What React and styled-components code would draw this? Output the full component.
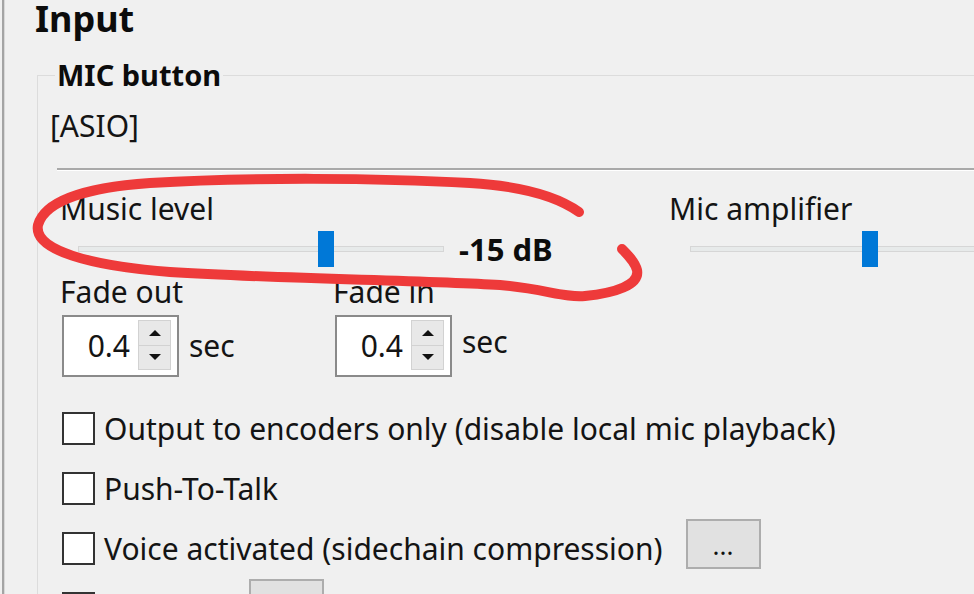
import React from "react";
import styled, { createGlobalStyle } from "styled-components";

const GlobalStyle = createGlobalStyle`
  html, body {
    margin: 0;
    padding: 0;
    background: #f0f0f0;
    overflow: hidden;
  }
  body {
    font-family: "Noto Sans", "Open Sans", sans-serif;
    color: #141414;
  }
`;

const Screen = styled.div`
  position: relative;
  width: 974px;
  height: 594px;
  overflow: hidden;
  display: flex;
  background: #f0f0f0;
`;

const Rule = styled.div`
  flex: none;
  width: 2px;
  margin-left: 2px;
  background: #a4a4a4;
  box-shadow: 1px 0 0 #d8d8d8;
`;

const Main = styled.div`
  flex: none;
  padding-left: 33px;
  display: flex;
  flex-direction: column;
`;

const Title = styled.h1`
  margin: 0 0 0 -2px;
  font-size: 36px;
  line-height: 38px;
  font-weight: 700;
  color: #0c0c0c;
`;

const Group = styled.fieldset`
  margin: 23px 0 0 0;
  padding: 0 0 40px 12px;
  width: 1100px;
  border: 1px solid #dcdcdc;
  border-right: none;
  min-width: 0;
`;

const Legend = styled.legend`
  margin-left: 5px;
  padding: 0 2px;
  font-size: 29px;
  line-height: 28px;
  font-weight: 700;
  color: #0c0c0c;
`;

const Device = styled.div`
  margin-top: 19px;
  font-size: 30px;
  line-height: 36px;
`;

const Separator = styled.div`
  margin: 24px 0 0 7px;
  height: 0;
  border-top: 2px solid #a9a9a9;
  border-bottom: 1px solid #ffffff;
`;

const Columns = styled.div`
  display: flex;
  margin: ${(p) => p.$top}px 0 0 10px;
`;

const Column = styled.div`
  flex: none;
  width: ${(p) => p.$width}px;
  display: flex;
  flex-direction: column;
  align-items: flex-start;
`;

const Label = styled.div`
  font-size: 30px;
  line-height: 36px;
  white-space: nowrap;
`;

const Slider = styled.div`
  display: flex;
  align-items: center;
  height: 36px;
  margin: 4px 0 0 ${(p) => p.$indent}px;
`;

const Track = styled.div`
  position: relative;
  flex: none;
  width: 364px;
  height: 4px;
  background: #e7eaea;
  border: 1px solid #d6d6d6;
`;

const Thumb = styled.div`
  position: absolute;
  top: -16px;
  left: ${(p) => p.$pos}px;
  width: 16px;
  height: 36px;
  background: #0078d7;
`;

const Value = styled.div`
  margin-left: 15px;
  font-size: 31px;
  line-height: 36px;
  font-weight: 700;
  color: #0c0c0c;
`;

const SpinRow = styled.div`
  display: flex;
  align-items: center;
  margin: 5px 0 0 2px;
`;

const SpinBox = styled.div`
  box-sizing: border-box;
  width: 117px;
  height: 62px;
  background: #ffffff;
  border: 2px solid #8a8a8a;
  display: flex;
  align-items: center;
  justify-content: flex-end;
  padding-right: 6px;
`;

const SpinValue = styled.div`
  font-size: 30px;
  line-height: 36px;
  margin-right: 8px;
`;

const SpinButtons = styled.div`
  display: flex;
  flex-direction: column;
  width: 33px;
  height: 50px;
  margin-bottom: 2px;
`;

const SpinButton = styled.div`
  flex: 1;
  display: flex;
  align-items: center;
  justify-content: center;
  background: #e8e8e8;
  border: 1px solid #d2d2d2;
  & + & {
    border-top: none;
  }
`;

const Arrow = styled.div`
  width: 0;
  height: 0;
  border-left: 6px solid transparent;
  border-right: 6px solid transparent;
  ${(p) =>
    p.$down
      ? "border-top: 6px solid #111;"
      : "border-bottom: 6px solid #111;"}
`;

const Unit = styled.div`
  margin-left: 10px;
  font-size: 30px;
  line-height: 36px;
  position: relative;
  top: ${(p) => p.$shift || 0}px;
`;

const CheckList = styled.div`
  display: flex;
  flex-direction: column;
  gap: 27px;
  margin: 35px 0 0 12px;
`;

const CheckRow = styled.div`
  display: flex;
  align-items: center;
  height: 33px;
`;

const Box = styled.div`
  box-sizing: border-box;
  flex: none;
  width: 33px;
  height: 33px;
  background: #ffffff;
  border: 2px solid #333333;
`;

const CheckLabel = styled.div`
  margin-left: 9px;
  font-size: 30px;
  line-height: 36px;
  white-space: nowrap;
  ${(p) => (p.$width ? `width: ${p.$width}px;` : "")}
`;

const MoreButton = styled.div`
  box-sizing: border-box;
  flex: none;
  width: 75px;
  height: 50px;
  margin: 0 0 10px ${(p) => p.$gap}px;
  background: #e1e1e1;
  border: 2px solid #adadad;
  display: flex;
  align-items: center;
  justify-content: center;
  font-size: 26px;
  line-height: 26px;
  padding-top: 2px;
  color: #111;
`;

const Annotation = styled.svg`
  position: absolute;
  left: 0;
  top: 0;
  pointer-events: none;
`;

function SliderControl({ label, indent, pos, value }) {
  return (
    <>
      <Label>{label}</Label>
      <Slider $indent={indent}>
        <Track>
          <Thumb $pos={pos} />
        </Track>
        {value && <Value>{value}</Value>}
      </Slider>
    </>
  );
}

function Spin({ label, value, shift }) {
  return (
    <>
      <Label>{label}</Label>
      <SpinRow>
        <SpinBox>
          <SpinValue>{value}</SpinValue>
          <SpinButtons>
            <SpinButton>
              <Arrow />
            </SpinButton>
            <SpinButton>
              <Arrow $down />
            </SpinButton>
          </SpinButtons>
        </SpinBox>
        <Unit $shift={shift}>sec</Unit>
      </SpinRow>
    </>
  );
}

export default function App() {
  return (
    <>
      <GlobalStyle />
      <Screen>
        <Rule />
        <Main>
          <Title>Input</Title>
          <Group>
            <Legend>MIC button</Legend>
            <Device>[ASIO]</Device>
            <Separator />
            <Columns $top={20}>
              <Column $width={609}>
                <SliderControl label="Music level" indent={18} pos={239} value="-15 dB" />
              </Column>
              <Column $width={400}>
                <SliderControl label="Mic amplifier" indent={21} pos={171} />
              </Column>
            </Columns>
            <Columns $top={7}>
              <Column $width={273}>
                <Spin label="Fade out" value="0.4" />
              </Column>
              <Column $width={273}>
                <Spin label="Fade in" value="0.4" shift={-4} />
              </Column>
            </Columns>
            <CheckList>
              <CheckRow>
                <Box />
                <CheckLabel>Output to encoders only (disable local mic playback)</CheckLabel>
              </CheckRow>
              <CheckRow>
                <Box />
                <CheckLabel>Push-To-Talk</CheckLabel>
              </CheckRow>
              <CheckRow>
                <Box />
                <CheckLabel>Voice activated (sidechain compression)</CheckLabel>
                <MoreButton $gap={23}>...</MoreButton>
              </CheckRow>
              <CheckRow>
                <Box />
                <CheckLabel $width={145} />
                <MoreButton $gap={0}>...</MoreButton>
              </CheckRow>
            </CheckList>
          </Group>
        </Main>
        <Annotation width="974" height="594" viewBox="0 0 974 594">
          <path
            d="M579 212 C 555 195, 520 186, 470 183 C 380 178, 250 177, 150 183 C 90 187, 45 200, 38 225 C 33 250, 90 266, 170 272 C 280 279, 420 280, 500 285 C 545 289, 565 298, 585 296 C 615 293, 640 285, 637 270 C 635 262, 628 255, 622 249"
            fill="none"
            stroke="#ee3a3a"
            strokeWidth="10"
            strokeLinecap="round"
            strokeLinejoin="round"
          />
        </Annotation>
      </Screen>
    </>
  );
}
